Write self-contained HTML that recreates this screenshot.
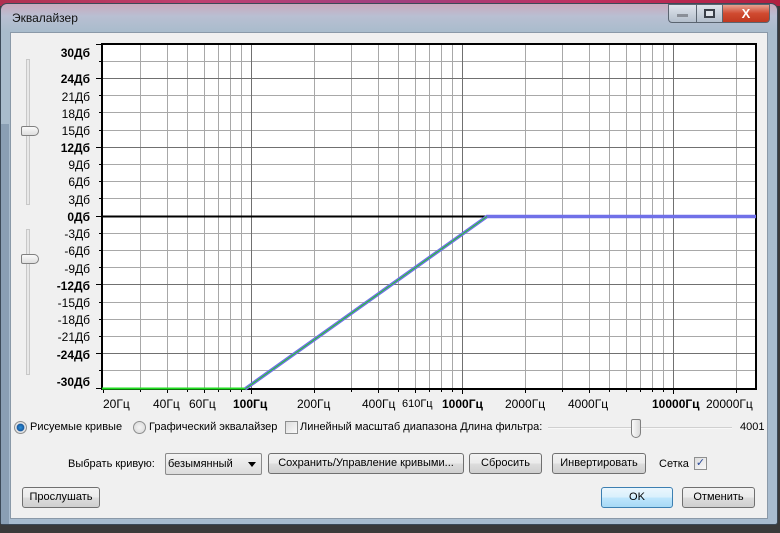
<!DOCTYPE html>
<html><head><meta charset="utf-8">
<style>
*{margin:0;padding:0;box-sizing:border-box}
body{width:780px;height:533px;overflow:hidden;background:#3a3a3a;font-family:"Liberation Sans","DejaVu Sans",sans-serif;font-size:11px;color:#000;position:relative}
.top{position:absolute;left:0;top:0;width:780px;height:6px;background:linear-gradient(90deg,#b03050,#c04070,#a04080,#c03060,#b02040)}
.frame{position:absolute;left:0;top:3px;width:778px;height:522px;border-radius:7px 7px 3px 3px;border:1px solid #3c4a58;
background:linear-gradient(180deg,#c9a9bd 0,#b9bfd2 12px,#a9bccc 28px,#a8bccf 100%)}
.frame:before{content:"";position:absolute;left:0;top:120px;width:8px;height:400px;background:#8a9fb4}
.title{position:absolute;left:12px;top:11px;font-size:12px;color:#111}
.wb{position:absolute;top:4px;height:19px;border:1px solid #5a6470;background:linear-gradient(#dfe4ec,#b4bfcc);}
.client{position:absolute;left:10px;top:32px;width:758px;height:487px;background:#f0f0f0;border:1px solid #8a99a8}
.t{position:absolute;white-space:nowrap}
.btn{position:absolute;height:21px;border:1px solid #707070;border-radius:3px;background:linear-gradient(#f2f2f2 0,#ebebeb 50%,#dddddd 51%,#cfcfcf 100%);text-align:center;line-height:19px;white-space:nowrap}
.radio{position:absolute;width:13px;height:13px;border-radius:50%;border:1px solid #8e8f8f;background:radial-gradient(#f4f4f4,#d6d6d6)}
.chk{position:absolute;width:13px;height:13px;border:1px solid #8e8f8f;background:linear-gradient(135deg,#dcdcdc,#fafafa)}
.track{position:absolute;width:4px;border:1px solid #c8c8c8;background:#e8e8e8}
.thumb{position:absolute;width:18px;height:10px;border:1px solid #808080;border-radius:2px 5px 5px 2px;background:linear-gradient(#fafafa,#dedede)}
</style></head><body>
<div class="top"></div>
<div class="frame"></div>
<div class="title">Эквалайзер</div>
<div class="wb" style="left:668px;width:29px;border-radius:0 0 0 4px"><div style="position:absolute;left:8px;top:9px;width:11px;height:3px;background:#8a8f98"></div></div>
<div class="wb" style="left:696px;width:27px"><div style="position:absolute;left:7px;top:4px;width:11px;height:9px;border:2px solid #3a3f48;background:#e0e4ea"></div></div>
<div class="wb" style="left:722px;width:48px;border-radius:0 0 4px 0;background:linear-gradient(#e8a090,#d04a30 50%,#c03820)"><div style="position:absolute;left:0;width:100%;top:0;text-align:center;color:#fff;font-weight:bold;font-size:13px;line-height:17px">X</div></div>
<div class="client"></div>

<div class="track" style="left:26px;top:59px;height:146px"></div>
<div class="thumb" style="left:21px;top:126px"></div>
<div class="track" style="left:26px;top:229px;height:146px"></div>
<div class="thumb" style="left:21px;top:254px"></div>

<svg style="position:absolute;left:0;top:0" width="780" height="420" xmlns="http://www.w3.org/2000/svg" font-family="Liberation Sans, DejaVu Sans, sans-serif" font-size="12">
<rect x="102" y="44" width="654" height="345" fill="#fff"/>
<g stroke="#a8a8a8" stroke-width="1">
<path d="M140.5 44V389M167.5 44V389M187.5 44V389M204.5 44V389M218.5 44V389M230.5 44V389M241.5 44V389M314.5 44V389M351.5 44V389M378.5 44V389M398.5 44V389M415.5 44V389M429.5 44V389M441.5 44V389M452.5 44V389M525.5 44V389M562.5 44V389M589.5 44V389M609.5 44V389M626.5 44V389M640.5 44V389M652.5 44V389M663.5 44V389M736.5 44V389"/>
<path d="M102 61.5H756M102 95.5H756M102 112.5H756M102 130.5H756M102 164.5H756M102 181.5H756M102 198.5H756M102 233.5H756M102 250.5H756M102 267.5H756M102 302.5H756M102 319.5H756M102 336.5H756M102 370.5H756"/>
</g>
<g stroke="#707070" stroke-width="1">
<path d="M251.5 44V389M462.5 44V389M673.5 44V389M102 78.5H756M102 147.5H756M102 284.5H756M102 353.5H756"/>
</g>
<path d="M102 216.5H756" stroke="#000" stroke-width="2"/>
<rect x="102" y="44" width="654" height="345" fill="none" stroke="#000" stroke-width="2"/>
<g stroke="#000" stroke-width="1">
<path d="M96 44.5H101M99 61.5H101M96 78.5H101M99 95.5H101M99 112.5H101M99 130.5H101M96 147.5H101M99 164.5H101M99 181.5H101M99 198.5H101M96 216.5H101M99 233.5H101M99 250.5H101M99 267.5H101M96 284.5H101M99 302.5H101M99 319.5H101M99 336.5H101M96 353.5H101M99 370.5H101M96 388.5H101"/>
<path d="M103.5 390V393M140.5 390V392M167.5 390V393M187.5 390V392M204.5 390V393M218.5 390V392M230.5 390V392M241.5 390V392M251.5 390V394M314.5 390V393M351.5 390V392M378.5 390V393M398.5 390V392M415.5 390V393M429.5 390V392M441.5 390V392M452.5 390V392M462.5 390V394M525.5 390V393M562.5 390V392M589.5 390V393M609.5 390V392M626.5 390V392M640.5 390V392M652.5 390V392M663.5 390V392M673.5 390V394M736.5 390V393"/>
</g>
<path d="M102 388.5H240L247 388.5" stroke="#22dd22" stroke-width="2" fill="none"/>
<path d="M245 389L487 216.5H756" stroke="#7070e8" stroke-width="3.5" fill="none"/>
<path d="M245 389L487 216.5" stroke="#22cc22" stroke-width="1" fill="none"/>
<g text-anchor="end">
<text x="90" y="57" font-weight="bold">30Дб</text>
<text x="90" y="83" font-weight="bold">24Дб</text>
<text x="90" y="101">21Дб</text>
<text x="90" y="118">18Дб</text>
<text x="90" y="135">15Дб</text>
<text x="90" y="152" font-weight="bold">12Дб</text>
<text x="90" y="169">9Дб</text>
<text x="90" y="186">6Дб</text>
<text x="90" y="204">3Дб</text>
<text x="90" y="221" font-weight="bold">0Дб</text>
<text x="90" y="238">-3Дб</text>
<text x="90" y="255">-6Дб</text>
<text x="90" y="273">-9Дб</text>
<text x="90" y="290" font-weight="bold">-12Дб</text>
<text x="90" y="307">-15Дб</text>
<text x="90" y="324">-18Дб</text>
<text x="90" y="341">-21Дб</text>
<text x="90" y="359" font-weight="bold">-24Дб</text>
<text x="90" y="386" font-weight="bold">-30Дб</text>
</g>
<g>
<text x="103" y="408">20Гц</text>
<text x="153" y="408">40Гц</text>
<text x="189" y="408">60Гц</text>
<text x="233" y="408" font-weight="bold">100Гц</text>
<text x="297" y="408">200Гц</text>
<text x="362" y="408">400Гц</text>
<text x="402" y="407" font-size="11">610Гц</text>
<text x="442" y="408" font-weight="bold">1000Гц</text>
<text x="505" y="408">2000Гц</text>
<text x="568" y="408">4000Гц</text>
<text x="652" y="408" font-weight="bold">10000Гц</text>
<text x="706" y="408">20000Гц</text>
</g>
</svg>

<div class="radio" style="left:14px;top:421px;background:radial-gradient(#2a90d8 0,#1a5aa0 45%,#e8e8e8 55%,#d0d0d0)"></div>
<div class="t" style="left:30px;top:421px">Рисуемые кривые</div>
<div class="radio" style="left:133px;top:421px"></div>
<div class="t" style="left:149px;top:421px">Графический эквалайзер</div>
<div class="chk" style="left:285px;top:421px"></div>
<div class="t" style="left:300px;top:421px">Линейный масштаб диапазона Длина фильтра:</div>
<div style="position:absolute;left:548px;top:427px;width:184px;height:2px;background:#d0d0d0;border-bottom:1px solid #f8f8f8"></div>
<div style="position:absolute;left:631px;top:419px;width:10px;height:19px;border:1px solid #808080;border-radius:2px 2px 5px 5px;background:linear-gradient(90deg,#fafafa,#dadada)"></div>
<div class="t" style="left:740px;top:421px">4001</div>

<div class="t" style="left:68px;top:458px">Выбрать кривую:</div>
<div style="position:absolute;left:165px;top:453px;width:97px;height:22px;border:1px solid #8a8a8a;border-radius:2px;background:linear-gradient(#f4f4f4,#dcdcdc)"></div>
<div class="t" style="left:168px;top:458px">безымянный</div>
<div style="position:absolute;left:248px;top:462px;width:0;height:0;border-left:4px solid transparent;border-right:4px solid transparent;border-top:5px solid #000"></div>
<div class="btn" style="left:268px;top:453px;width:196px">Сохранить/Управление кривыми...</div>
<div class="btn" style="left:469px;top:453px;width:73px">Сбросить</div>
<div class="btn" style="left:552px;top:453px;width:94px">Инвертировать</div>
<div class="t" style="left:659px;top:458px">Сетка</div>
<div class="chk" style="left:694px;top:457px;color:#2a4a9a;font-size:11px;line-height:11px;text-align:center">✓</div>

<div class="btn" style="left:22px;top:487px;width:78px">Прослушать</div>
<div class="btn" style="left:601px;top:487px;width:72px;border-color:#3c7fb1;background:linear-gradient(#eaf6fd 0,#d9f0fc 50%,#bee6fd 51%,#a7d9f5 100%)">OK</div>
<div class="btn" style="left:682px;top:487px;width:73px">Отменить</div>
</body></html>
